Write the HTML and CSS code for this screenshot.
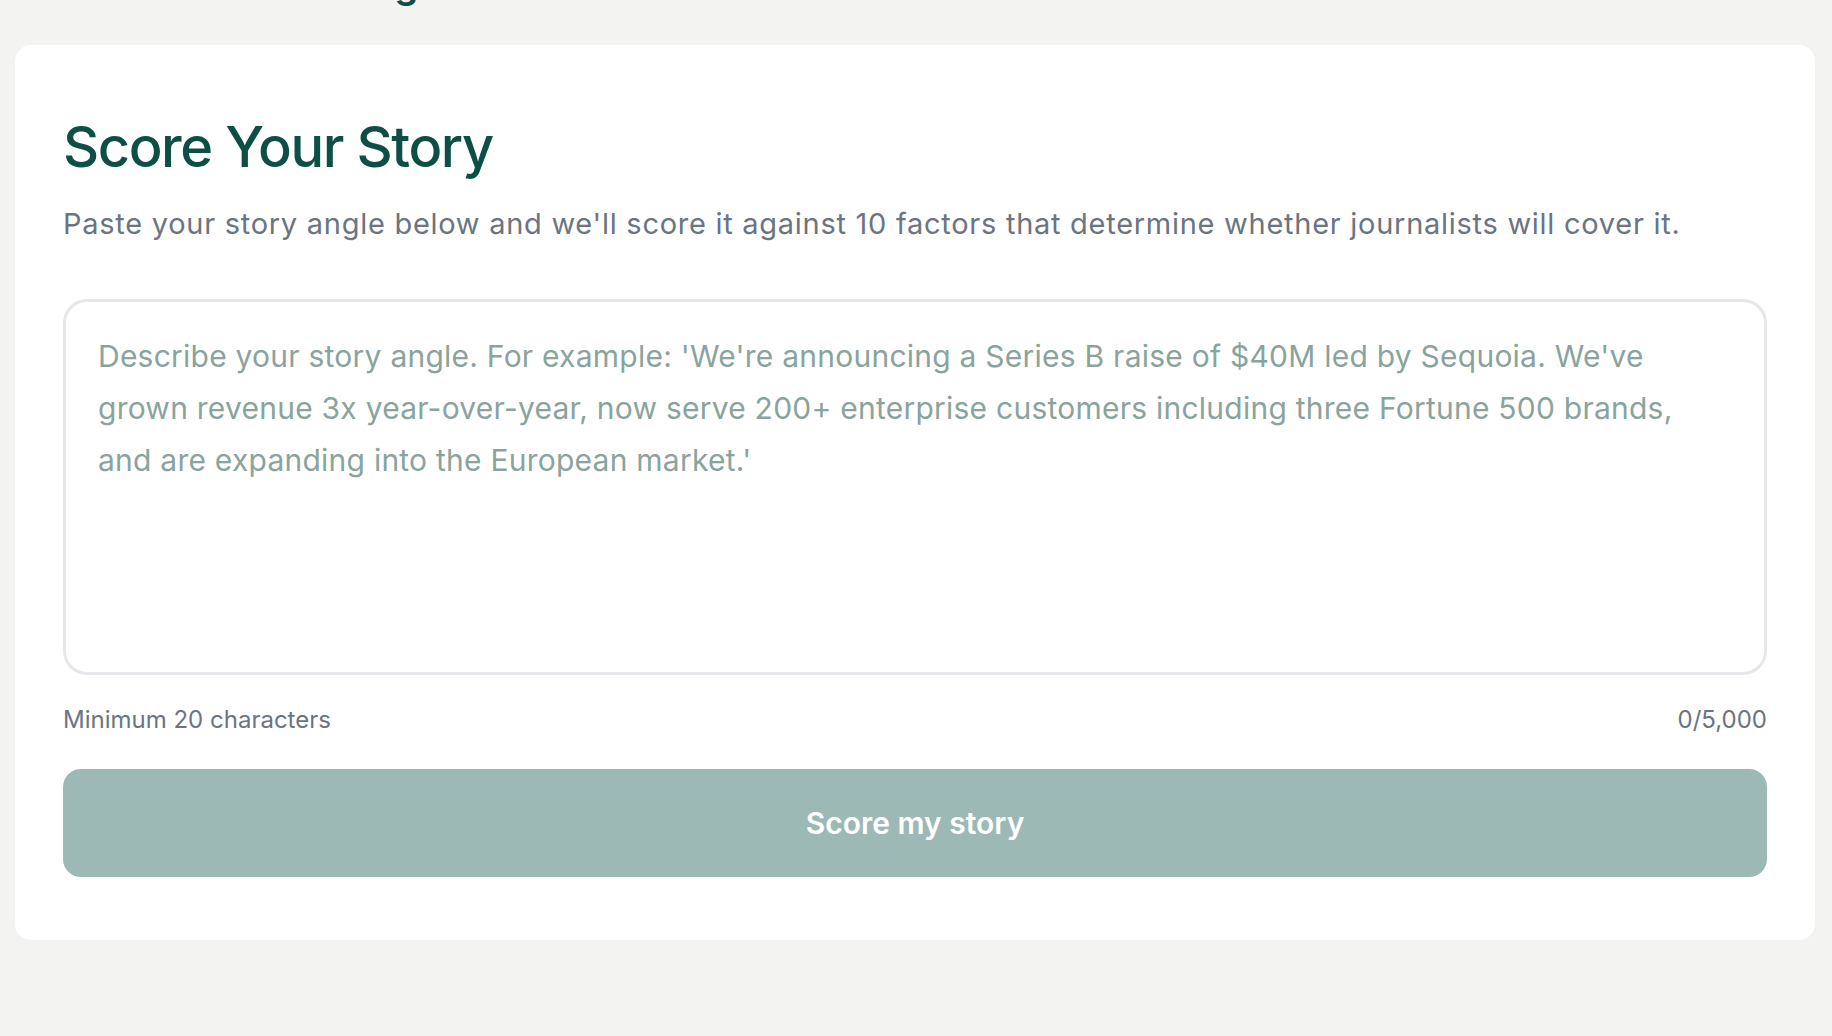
FILE: index.html
```html
<!DOCTYPE html>
<html lang="en">
<head>
<meta charset="utf-8">
<title>Score Your Story</title>
<link rel="stylesheet" href="styles.css">
</head>
<body>
<div class="page">
  <h1 class="page-title">Score the Pitch Angle</h1>
  <section class="card">
    <h2 class="card-title">Score Your Story</h2>
    <p class="card-sub">Paste your story angle below and we'll score it against 10 factors that determine whether journalists will cover it.</p>
    <textarea class="story-input" placeholder="Describe your story angle. For example: 'We're announcing a Series B raise of $40M led by Sequoia. We've&#10;grown revenue 3x year-over-year, now serve 200+ enterprise customers including three Fortune 500 brands,&#10;and are expanding into the European market.'"></textarea>
    <div class="meta">
      <span>Minimum 20 characters</span>
      <span>0/5,000</span>
    </div>
    <button class="submit" type="button">Score my story</button>
  </section>
</div>
</body>
</html>
```

FILE: styles.css
```css
* { box-sizing: border-box; }

html, body {
  margin: 0;
  padding: 0;
}

body {
  background: #f3f3f1;
  font-family: Inter, "Noto Sans", "Liberation Sans", sans-serif;
  min-height: 1036px;
}

.page {
  padding: 0 17px 0 15px;
}

.page-title {
  margin: -39px 0 38px 48px;
  font-size: 38px;
  line-height: 46px;
  font-weight: 600;
  color: #0b4f45;
  letter-spacing: -0.01em;
}

.card {
  background: #ffffff;
  border-radius: 16px;
  padding: 67px 48px 63px 48px;
}

.card-title {
  margin: 0;
  font-size: 56px;
  line-height: 70px;
  font-weight: 500;
  letter-spacing: -0.025em;
  color: #0d4f45;
}

.card-sub {
  margin: 22px 0 0 0;
  font-size: 29px;
  line-height: 40px;
  letter-spacing: 0.025em;
  color: #6b7480;
}

.story-input {
  display: block;
  width: 100%;
  height: 376px;
  margin-top: 55px;
  padding: 28px 32px;
  border: 3px solid #e6e7ea;
  border-radius: 24px;
  font-family: inherit;
  font-size: 30px;
  line-height: 52px;
  letter-spacing: 0.008em;
  color: #1f2937;
  background: #ffffff;
  resize: none;
  outline: none;
}

.story-input::placeholder {
  color: #8aa39d;
  opacity: 1;
}

.meta {
  display: flex;
  justify-content: space-between;
  margin-top: 27px;
  font-size: 24px;
  line-height: 36px;
  color: #6b7480;
}

.submit {
  display: block;
  width: 100%;
  height: 108px;
  margin-top: 31px;
  border: 0;
  border-radius: 18px;
  background: #9cb9b5;
  color: #ffffff;
  font-family: inherit;
  font-size: 30px;
  font-weight: 600;
  cursor: not-allowed;
}
```
